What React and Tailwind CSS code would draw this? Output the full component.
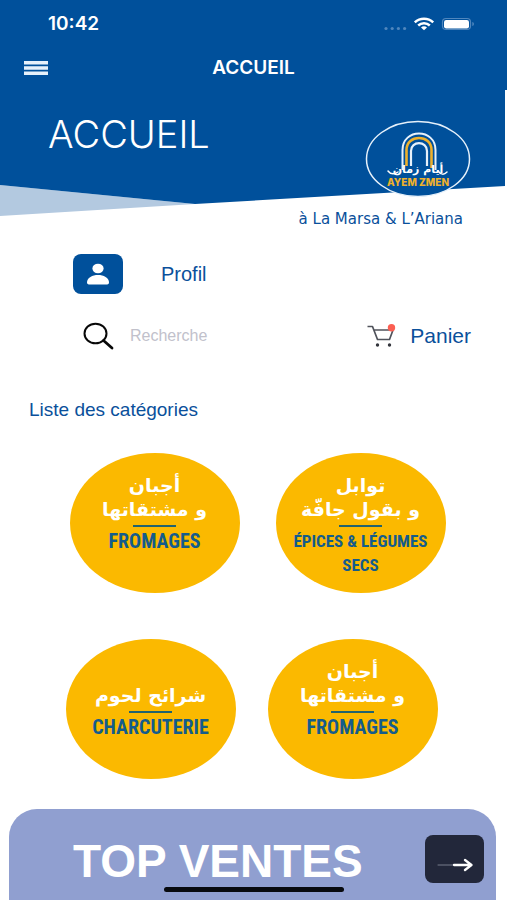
import { useState } from "react";

const rows = [
  {
    className: "gap-9 pl-2",
    items: [
      { id: 1, arabic: ["أجبان", "و مشتقاتها"], label: "FROMAGES", size: "text-xl", pad: "pt-5" },
      { id: 2, arabic: ["توابل", "و بقول جافّة"], label: "ÉPICES & LÉGUMES SECS", size: "text-[17px]", pad: "pt-5" },
    ],
  },
  {
    className: "gap-8 pr-1",
    items: [
      { id: 3, arabic: ["شرائح لحوم"], label: "CHARCUTERIE", size: "text-xl", pad: "pt-11" },
      { id: 4, arabic: ["أجبان", "و مشتقاتها"], label: "FROMAGES", size: "text-xl", pad: "pt-5" },
    ],
  },
];

function StatusBar() {
  return (
    <div className="flex items-center justify-between pl-12 pr-8 h-12">
      <span className="font-['Inter'] font-semibold text-[19px] leading-6">10:42</span>
      <svg width="92" height="16" viewBox="0 0 92 16" aria-hidden="true">
        <g fill="#4f86bd">
          <circle cx="3" cy="12.5" r="1.6" />
          <circle cx="9.2" cy="12.5" r="1.6" />
          <circle cx="15.4" cy="12.5" r="1.6" />
          <circle cx="21.6" cy="12.5" r="1.6" />
        </g>
        <g fill="none" stroke="#fff" strokeWidth="2.5">
          <path d="M31.8 6.3C37 1.4 45 1.4 50.2 6.3" />
          <path d="M35.2 9.5C38.5 6.5 43.5 6.5 46.8 9.5" />
        </g>
        <path d="M38 11.4c1.7-1.5 4.3-1.5 6 0L41 14.3z" fill="#fff" />
        <rect x="59.5" y="2.5" width="28" height="11" rx="3.5" fill="none" stroke="#4f86bd" strokeWidth="1.2" />
        <rect x="61" y="4" width="25" height="8.5" rx="2.2" fill="#fff" />
        <path d="M89.3 6c2.2.8 2.2 3.2 0 4z" fill="#4f86bd" />
      </svg>
    </div>
  );
}

function Logo() {
  return (
    <svg width="106" height="78" viewBox="0 0 106 78" role="img" aria-label="Ayem Zmen">
      <ellipse cx="53" cy="39" rx="51.5" ry="37.5" fill="#00509b" stroke="#e6f1fb" strokeWidth="1.5" />
      <g fill="none">
        <path d="M37.5 50V30c0-22 33-22 33 0v20" stroke="#e6f1fb" strokeWidth="2" />
        <path d="M41.5 46V30c0-16 25-16 25 0v18" stroke="#eeb12c" strokeWidth="2.6" />
        <path d="M46 46V31c0-10.5 16-10.5 16 0v15" stroke="#e6f1fb" strokeWidth="2.2" />
      </g>
      <path d="M23 51c3 4 7 3 10 1M73 51c3 4 6 4 9 1" fill="none" stroke="#fff" strokeWidth="1.5" strokeLinecap="round" />
      <text x="53" y="53" textAnchor="middle" fill="#fff" fontSize="11" fontWeight="700" fontFamily="DejaVu Sans, sans-serif">أيام زمان</text>
      <text x="53" y="66" textAnchor="middle" fill="#eeb12c" fontSize="10" fontWeight="800" fontFamily="Inter, sans-serif">AYEM ZMEN</text>
    </svg>
  );
}

function Banner() {
  return (
    <section className="relative h-[126px] mr-0.5">
      <svg className="absolute inset-0 w-full h-full" viewBox="0 0 505 126" preserveAspectRatio="none" aria-hidden="true">
        <path d="M0 95L195 114L0 126z" fill="#b3c9e0" />
        <path d="M0 0H505V96L195 114L0 95z" fill="#00509b" />
      </svg>
      <div className="relative flex justify-between pl-12 pr-[34px]">
        <h2 className="pt-6 text-white font-['Inter'] font-light text-[38px] leading-10">ACCUEIL</h2>
        <div className="pt-[30px]"><Logo /></div>
      </div>
    </section>
  );
}

function Category({ item }) {
  return (
    <button className={`w-[170px] h-[140px] shrink-0 rounded-[50%] bg-[#fbb900] flex flex-col items-center ${item.pad}`}>
      <span dir="rtl" className="text-white font-bold font-['DejaVu_Sans'] text-[19px] leading-6">
        {item.arabic.map((line) => <span key={line} className="block">{line}</span>)}
      </span>
      <span className="mt-1 w-[43px] h-0.5 bg-[#21636f] shrink-0" />
      <span className={`mt-0.5 px-3 font-bold font-['Roboto_Condensed',Roboto,sans-serif] leading-6 text-[#145c8b] ${item.size}`}>
        {item.label}
      </span>
    </button>
  );
}

export default function App() {
  const [query, setQuery] = useState("");

  return (
    <div className="min-h-screen flex flex-col bg-white text-[#0a509b] font-['Liberation_Sans',sans-serif]">
      <header className="bg-[#00509b] text-white h-[90px]">
        <StatusBar />
        <div className="grid grid-cols-3 items-center px-6 h-10">
          <button aria-label="Menu" className="justify-self-start">
            <svg width="24" height="14" viewBox="0 0 24 14" fill="#e6f1fb">
              <path d="M0 0h24v3.4H0zM0 5.3h24v3.4H0zM0 10.6h24V14H0z" />
            </svg>
          </button>
          <h1 className="justify-self-center font-['Inter'] font-semibold text-[19px] leading-6">ACCUEIL</h1>
        </div>
      </header>

      <Banner />
      <p className="pr-11 -mt-[7px] text-right font-['DejaVu_Sans'] text-[15px] leading-5">à La Marsa &amp; L’Ariana</p>

      <a href="#profil" className="mt-[25px] ml-[73px] flex items-center gap-[38px] self-start text-xl leading-6">
        <span className="w-[50px] h-10 rounded-lg bg-[#00509b] flex items-center justify-center">
          <svg width="22" height="22" viewBox="0 0 22 22" fill="#fff">
            <ellipse cx="11" cy="5.5" rx="5.6" ry="4.8" />
            <path d="M0 19.5C0 9.5 22 9.5 22 19.5Q22 21.5 19 21.5H3Q0 21.5 0 19.5z" />
          </svg>
        </span>
        Profil
      </a>

      <div className="mt-7 pl-[83px] pr-9 flex items-center justify-between">
        <label className="flex items-center gap-4 min-w-0">
          <svg className="shrink-0" width="31" height="28" viewBox="0 0 31 28" fill="none" stroke="#080808" strokeWidth="2">
            <ellipse cx="12.5" cy="11.5" rx="11" ry="9.8" />
            <path d="M20.5 18.5L29 26" strokeWidth="2.8" strokeLinecap="round" />
          </svg>
          <input
            type="text"
            aria-label="Recherche"
            placeholder="Recherche"
            value={query}
            onChange={(e) => setQuery(e.target.value)}
            className="w-40 min-w-0 text-base leading-6 outline-none placeholder:text-[#c1c1cb]"
          />
        </label>
        <a href="#panier" className="flex items-center gap-3.5 text-[21px] leading-6">
          <svg width="29" height="24" viewBox="0 0 29 24" fill="none" stroke="#50535b" strokeWidth="1.7">
            <path d="M0.5 2.5H5.5L10.5 15.5H22.5L26 6H7" strokeLinejoin="round" />
            <circle cx="10.5" cy="21" r="1.7" fill="#33353c" stroke="none" />
            <circle cx="22.5" cy="21" r="1.7" fill="#33353c" stroke="none" />
            <circle cx="24.5" cy="3.8" r="3.7" fill="#fb5f52" stroke="none" />
          </svg>
          Panier
        </a>
      </div>

      <h3 className="mt-12 ml-[29px] text-[19px] leading-6">Liste des catégories</h3>

      <div className="mt-[31px] flex flex-col gap-[46px]">
        {rows.map((row, i) => (
          <div key={i} className={`flex justify-center ${row.className}`}>
            {row.items.map((item) => <Category key={item.id} item={item} />)}
          </div>
        ))}
      </div>

      <section className="mt-[30px] ml-[9px] mr-[11px] flex-1 rounded-t-[28px] bg-[#909fd0] flex items-start justify-between pl-16 pr-3">
        <h2 className="mt-7 text-white font-bold text-[46px] leading-12">TOP VENTES</h2>
        <button aria-label="Voir les top ventes" className="mt-[26px] w-[59px] h-12 rounded-lg bg-[#22273a] flex items-center justify-center">
          <svg className="mt-3" width="36" height="14" viewBox="0 0 36 14" fill="none" stroke="#fff" strokeLinecap="round" strokeLinejoin="round">
            <path d="M1 7H17" stroke="#777c8b" strokeWidth="1" />
            <path d="M17 7H34M28 2L34.5 7L28 12" strokeWidth="2.3" />
          </svg>
        </button>
      </section>
      <div className="fixed bottom-2 left-1/2 -translate-x-1/2 w-[180px] h-[5px] rounded-full bg-[#080a0f]" />
    </div>
  );
}
